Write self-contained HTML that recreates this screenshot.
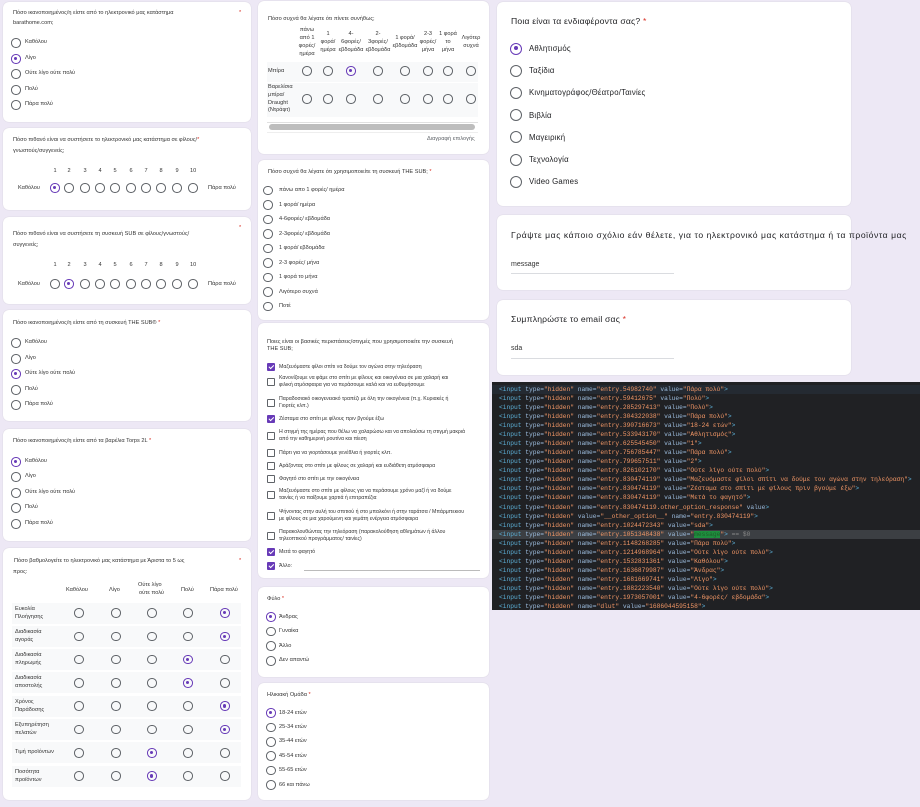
<!DOCTYPE html>
<html><head><meta charset="utf-8">
<style>
*{margin:0;padding:0;box-sizing:border-box}
body{width:920px;height:807px;background:#ede8f5;position:relative;overflow:hidden;font-family:"Liberation Sans","DejaVu Sans",sans-serif;color:#202124}
.c{position:absolute;background:#fff;border-radius:6px;box-shadow:0 0 1px rgba(0,0,0,.18)}
.t{position:absolute;white-space:nowrap;font-size:5.6px;line-height:7px;color:#333}
.r{position:absolute;width:9.5px;height:9.5px;border:1.2px solid #5f6368;border-radius:50%}
.r.s{border-color:#673ab7}
.r.s:after{content:"";position:absolute;left:2px;top:2px;width:3.2px;height:3.2px;border-radius:50%;background:#673ab7}
.R{position:absolute;width:12px;height:12px;border:1.5px solid #5f6368;border-radius:50%}
.R.s{border-color:#673ab7}
.R.s:after{content:"";position:absolute;left:2.5px;top:2.5px;width:4px;height:4px;border-radius:50%;background:#673ab7}
.k{position:absolute;width:7.5px;height:7.5px;border:1.2px solid #5f6368;border-radius:1px}
.k.s{background:#673ab7;border-color:#673ab7}
.k.s:after{content:"";position:absolute;left:1.6px;top:0;width:2px;height:3.5px;border:solid #fff;border-width:0 1px 1px 0;transform:rotate(45deg)}
.st{color:#d93025}
.row{position:absolute;background:#f8f9fa}
.T{position:absolute;white-space:nowrap;font-size:8.6px;line-height:11px;color:#202124;letter-spacing:.2px}
#code{position:absolute;left:492px;top:382px;width:428px;height:228px;background:#202124;font-family:"Liberation Mono",monospace;font-size:6.25px}
#code div{position:absolute;left:7px;white-space:pre;line-height:9px;color:#9bbbdc}
.g{color:#5db0d7}.v{color:#f29766}
</style></head><body>

<div class="c" style="left:3px;top:2px;width:248px;height:120px"></div>
<div class="t" style="left:13px;top:10px">Πόσο ικανοποιημένος/η είστε από το ηλεκτρονικό μας κατάστημα</div>
<div class="t" style="left:13px;top:20px">barathome.com;</div>
<div class="t st" style="left:239px;top:10px">*</div>
<div class="r" style="left:11px;top:38px"></div><div class="t" style="left:25px;top:39px">Καθόλου</div>
<div class="r s" style="left:11px;top:54px"></div><div class="t" style="left:25px;top:55px">Λίγο</div>
<div class="r" style="left:11px;top:69px"></div><div class="t" style="left:25px;top:70px">Ούτε λίγο ούτε πολύ</div>
<div class="r" style="left:11px;top:85px"></div><div class="t" style="left:25px;top:86px">Πολύ</div>
<div class="r" style="left:11px;top:100px"></div><div class="t" style="left:25px;top:101px">Πάρα πολύ</div>

<div class="c" style="left:3px;top:128px;width:248px;height:82px"></div>
<div class="t" style="left:13px;top:137px">Πόσο πιθανό είναι να συστήσετε το ηλεκτρονικό μας κατάστημα σε φίλους/<span class="st">*</span></div>
<div class="t" style="left:13px;top:148px">γνωστούς/συγγενείς;</div>
<div class="c" style="left:3px;top:217px;width:248px;height:87px"></div>
<div class="t" style="left:13px;top:231px">Πόσο πιθανό είναι να συστήσετε τη συσκευή SUB σε φίλους/γνωστούς/</div>
<div class="t" style="left:13px;top:242px">συγγενείς;</div>
<div class="t st" style="left:239px;top:225px">*</div>

<div class="c" style="left:3px;top:310px;width:248px;height:111px"></div>
<div class="t" style="left:13px;top:320px">Πόσο ικανοποιημένος/η είστε από τη συσκευή THE SUB® <span class="st">*</span></div>
<div class="r" style="left:11px;top:338px"></div><div class="t" style="left:25px;top:339px">Καθόλου</div>
<div class="r" style="left:11px;top:354px"></div><div class="t" style="left:25px;top:355px">Λίγο</div>
<div class="r s" style="left:11px;top:369px"></div><div class="t" style="left:25px;top:370px">Ούτε λίγο ούτε πολύ</div>
<div class="r" style="left:11px;top:385px"></div><div class="t" style="left:25px;top:386px">Πολύ</div>
<div class="r" style="left:11px;top:400px"></div><div class="t" style="left:25px;top:401px">Πάρα πολύ</div>

<div class="c" style="left:3px;top:429px;width:248px;height:112px"></div>
<div class="t" style="left:13px;top:438px">Πόσο ικανοποιημένος/η είστε από τα βαρέλια Torps 2L <span class="st">*</span></div>
<div class="r s" style="left:11px;top:457px"></div><div class="t" style="left:25px;top:458px">Καθόλου</div>
<div class="r" style="left:11px;top:472px"></div><div class="t" style="left:25px;top:473px">Λίγο</div>
<div class="r" style="left:11px;top:488px"></div><div class="t" style="left:25px;top:489px">Ούτε λίγο ούτε πολύ</div>
<div class="r" style="left:11px;top:503px"></div><div class="t" style="left:25px;top:504px">Πολύ</div>
<div class="r" style="left:11px;top:519px"></div><div class="t" style="left:25px;top:520px">Πάρα πολύ</div>

<div class="c" style="left:3px;top:548px;width:248px;height:252px"></div>
<div class="t" style="left:14px;top:558px">Πόσο βαθμολογείτε το ηλεκτρονικό μας κατάστημα με Άριστα το 5 ως</div>
<div class="t" style="left:13px;top:569px">προς:</div>
<div class="t st" style="left:239px;top:558px">*</div>

<div class="c" style="left:258px;top:1px;width:231px;height:153px"></div>
<div class="t" style="left:268px;top:16px">Πόσο συχνά θα λέγατε ότι πίνετε συνήθως;</div>
<div class="row" style="left:267px;top:62px;width:211px;height:20px"></div>
<div class="row" style="left:267px;top:83px;width:211px;height:34px"></div>
<div class="t" style="left:268px;top:68px">Μπίρα</div>
<div class="t" style="left:268px;top:84px;line-height:7.8px">Βαρελίσια<br>μπίρα/<br>Draught<br>(Ντράφτ)</div>
<div style="position:absolute;left:267px;top:122px;width:211px;height:1px;background:#e0e0e0"></div>
<div style="position:absolute;left:269px;top:124px;width:206px;height:6px;border-radius:3px;background:#bdbdbd"></div>
<div style="position:absolute;left:267px;top:132px;width:211px;height:1px;background:#eee"></div>
<div class="t" style="left:427px;top:136px;color:#5f6368">Διαγραφή επιλογής</div>

<div class="c" style="left:258px;top:160px;width:231px;height:160px"></div>
<div class="t" style="left:268px;top:169px">Πόσο συχνά θα λέγατε ότι χρησιμοποιείτε τη συσκευή THE SUB; <span class="st">*</span></div>

<div class="c" style="left:258px;top:323px;width:231px;height:255px"></div>
<div class="t" style="left:267px;top:339px">Ποιες είναι οι βασικές περιστάσεις/στιγμές που χρησιμοποιείτε την συσκευή</div>
<div class="t" style="left:267px;top:346px">THE SUB;</div>

<div class="c" style="left:258px;top:587px;width:231px;height:90px"></div>
<div class="t" style="left:267px;top:596px">Φύλο <span class="st">*</span></div>
<div class="c" style="left:258px;top:683px;width:231px;height:117px"></div>
<div class="t" style="left:267px;top:692px">Ηλικιακή Ομάδα <span class="st">*</span></div>

<div class="c" style="left:497px;top:2px;width:354px;height:204px"></div>
<div class="T" style="left:511px;top:16px">Ποια είναι τα ενδιαφέροντα σας? <span class="st">*</span></div>
<div class="c" style="left:497px;top:215px;width:354px;height:75px"></div>
<div class="T" style="left:511px;top:230px;letter-spacing:.55px">Γράψτε μας κάποιο σχόλιο εάν θέλετε, για το ηλεκτρονικό μας κατάστημα ή τα προϊόντα μας</div>
<div class="t" style="left:511px;top:261px;font-size:7px;line-height:8px">message</div>
<div style="position:absolute;left:511px;top:273px;width:163px;height:1px;background:#dadce0"></div>
<div class="c" style="left:497px;top:300px;width:354px;height:75px"></div>
<div class="T" style="left:511px;top:314px">Συμπληρώστε το email σας <span class="st">*</span></div>
<div class="t" style="left:511px;top:345px;font-size:7px;line-height:8px">sda</div>
<div style="position:absolute;left:511px;top:358px;width:163px;height:1px;background:#dadce0"></div>

<div id="code"></div>

<div id="gen"></div>
<script>
var H='';
function a(s){H+=s}
function t(x,y,s,st){a('<div class="t" style="left:'+x+'px;top:'+(y-3.5)+'px;'+(st||'')+'">'+s+'</div>')}
function r(x,y,s){a('<div class="r'+(s?' s':'')+'" style="left:'+(x-4.75)+'px;top:'+(y-4.75)+'px"></div>')}
function R(x,y,s){a('<div class="R'+(s?' s':'')+'" style="left:'+(x-6)+'px;top:'+(y-6)+'px"></div>')}
function k(x,y,s){a('<div class="k'+(s?' s':'')+'" style="left:'+(x-3.75)+'px;top:'+(y-3.75)+'px"></div>')}
var sx=[55,69,85,100,115,131,146,161,177,193];
[[171,188,0],[265,284,1]].forEach(function(q){
 sx.forEach(function(x,i){t(x-(i==9?3:1.5),q[0],''+(i+1));r(x,q[1],i==q[2]);});
 t(18,q[1],'Καθόλου');t(208,q[1],'Πάρα πολύ');
});
var gx=[79,116,152,188,225];
t(66,590,'Καθόλου');t(109,590,'Λίγο');t(138,585,'Ούτε λίγο');t(139,593,'ούτε πολύ');t(181,590,'Πολύ');t(210,590,'Πάρα πολύ');
var rows=[['Ευκολία','Πλοήγησης',4],['Διαδικασία','αγοράς',4],['Διαδικασία','πληρωμής',3],['Διαδικασία','αποστολής',3],['Χρόνος','Παράδοσης',4],['Εξυπηρέτηση','πελατών',4],['Τιμή προϊόντων','',2],['Ποσότητα','προϊόντων',2]];
rows.forEach(function(rw,i){var y=613+i*23.3;
 a('<div class="row" style="left:12px;top:'+(y-10.5)+'px;width:229px;height:21px"></div>');
 if(rw[1]){t(15,y-4,rw[0]);t(15,y+4,rw[1]);}else t(15,y,rw[0]);
 gx.forEach(function(x,j){r(x,y,j==rw[2])});
});
var hx=[307,328,351,378,405,428,448,471];
var hd=[['πάνω','από 1','φορές/','ημέρα'],['1','φορά/','ημέρα'],['4-','6φορές/','εβδομάδα'],['2-','3φορές/','εβδομάδα'],['1 φορά/','εβδομάδα'],['2-3','φορές/','μήνα'],['1 φορά','το','μήνα'],['Λιγότερ','συχνά']];
hd.forEach(function(h,i){var n=h.length,y0=42-(n-1)*4;h.forEach(function(s,j){a('<div class="t" style="left:'+(hx[i]-15)+'px;width:30px;text-align:center;top:'+(y0+j*8-3.5)+'px">'+s+'</div>')})});
hx.forEach(function(x,i){r(x,71,i==2);r(x,99,0)});
['πάνω απο 1 φορές/ ημέρα','1 φορά/ ημέρα','4-6φορές/ εβδομάδα','2-3φορές/ εβδομάδα','1 φορά/ εβδομάδα','2-3 φορές/ μήνα','1 φορά το μήνα','Λιγότερο συχνά','Ποτέ'].forEach(function(s,i){var y=190.5+i*14.5;r(268,y);t(279,y,s)});
var cb=[[367,['Μαζευόμαστε φίλοι σπίτι να δούμε τον αγώνα στην τηλεόραση'],1],
[382,['Κανονίζουμε να φάμε στο σπίτι με φίλους και οικογένεια σε μια χαλαρή και','φιλική ατμόσφαιρα για να περάσουμε καλά και να ευθυμήσουμε'],0],
[403,['Παραδοσιακό οικογενειακό τραπέζι με όλη την οικογένεια (π.χ. Κυριακές ή','Γιορτές κλπ.)'],0],
[419,['Ζέσταμα στο σπίτι με φίλους πριν βγούμε έξω'],1],
[436,['Η στιγμή της ημέρας που θέλω να χαλαρώσω και να απολαύσω τη στιγμή μακριά','από την καθημερινή ρουτίνα και πίεση'],0],
[453,['Πάρτι για να γιορτάσουμε γενέθλια ή γιορτές κλπ.'],0],
[466,['Αράζοντας στο σπίτι με φίλους σε χαλαρή και ευδιάθετη ατμόσφαιρα'],0],
[479,['Φαγητό στο σπίτι με την οικογένεια'],0],
[495,['Μαζευόμαστε στο σπίτι με φίλους για να περάσουμε χρόνο μαζί ή να δούμε','ταινίες ή να παίξουμε χαρτιά ή επιτραπέζια'],0],
[516,['Ψήνοντας στην αυλή του σπιτιού ή στο μπαλκόνι ή στην ταράτσα / Μπάρμπεκιου','με φίλους σε μια χαρούμενη και γεμάτη ενέργεια ατμόσφαιρα'],0],
[536,['Παρακολουθώντας την τηλεόραση (παρακολούθηση αθλημάτων ή άλλου','τηλεοπτικού προγράμματος/ ταινίες)'],0],
[552,['Μετά το φαγητό'],1],[566,['Άλλο:'],1]];
cb.forEach(function(c){k(271,c[0],c[2]);if(c[1].length==2){t(279,c[0]-4,c[1][0],'font-size:5.2px');t(279,c[0]+3.5,c[1][1],'font-size:5.2px')}else t(279,c[0],c[1][0],'font-size:5.2px')});
a('<div style="position:absolute;left:304px;top:570px;width:176px;height:1px;background:#bbb"></div>');
['Άνδρας','Γυναίκα','Άλλο','Δεν απαντώ'].forEach(function(s,i){var y=617+i*14.6;r(271,y,i==0);t(279,y,s)});
['18-24 ετών','25-34 ετών','35-44 ετών','45-54 ετών','55-65 ετών','66 και πάνω'].forEach(function(s,i){var y=713+i*14.4;r(271,y,i==0);t(279,y,s)});
['Αθλητισμός','Ταξίδια','Κινηματογράφος/Θέατρο/Ταινίες','Βιβλία','Μαγειρική','Τεχνολογία','Video Games'].forEach(function(s,i){var y=48.5+i*22.2;R(516,y,i==0);a('<div class="T" style="left:529px;top:'+(y-5.5)+'px;font-size:7.8px">'+s+'</div>')});
document.getElementById('gen').innerHTML=H;
var L=[['54982740','Πάρα πολύ'],['59412675','Πολύ'],['285297413','Πολύ'],['304322038','Πάρα πολύ'],['390716673','18-24 ετών'],['533943170','Αθλητισμός'],['625545450','1'],['756785447','Πάρα πολύ'],['799657511','2'],['826102170','Ούτε λίγο ούτε πολύ'],['830474119','Μαζευόμαστε φίλοι σπίτι να δούμε τον αγώνα στην τηλεόραση'],['830474119','Ζέσταμα στο σπίτι με φίλους πριν βγούμε έξω'],['830474119','Μετά το φαγητό'],['O'],['V'],['1024472343','sda'],['M'],['1148268285','Πάρα πολύ'],['1214968964','Ούτε λίγο ούτε πολύ'],['1532831361','Καθόλου'],['1636879987','Άνδρας'],['1681669741','Λίγο'],['1882223540','Ούτε λίγο ούτε πολύ'],['1973057001','4-6φορές/ εβδομάδα'],['D']];
var C='';
L.forEach(function(l,i){var y=385+i*9.08-382,bg='';var s='<span class="g">&lt;input</span> type=<span class="v">"hidden"</span> ';
 if(l[0]=='O')s+='name=<span class="v">"entry.830474119.other_option_response"</span> value<span class="g">&gt;</span>';
 else if(l[0]=='V')s+='value=<span class="v">"__other_option__"</span> name=<span class="v">"entry.830474119"</span><span class="g">&gt;</span>';
 else if(l[0]=='M'){s+='name=<span class="v">"entry.1051348438"</span> value=<span class="v">"<span style="background:#1e8e3e;color:#1e5d2a">message</span>"</span><span class="g">&gt;</span> <span style="color:#888">== $0</span>';bg='background:#3c3f43;left:0;padding-left:7px;width:428px;'}
 else if(l[0]=='D')s+='name=<span class="v">"dlut"</span> value=<span class="v">"1686044595158"</span><span class="g">&gt;</span>';
 else s+='name=<span class="v">"entry.'+l[0]+'"</span> value=<span class="v">"'+l[1]+'"</span><span class="g">&gt;</span>';
 if(i==0)bg='background:#242a32;left:0;padding-left:7px;width:428px;';
 C+='<div style="top:'+(y-0.5)+'px;'+bg+'">'+s+'</div>';});
document.getElementById('code').innerHTML=C;
</script>
</body></html>
